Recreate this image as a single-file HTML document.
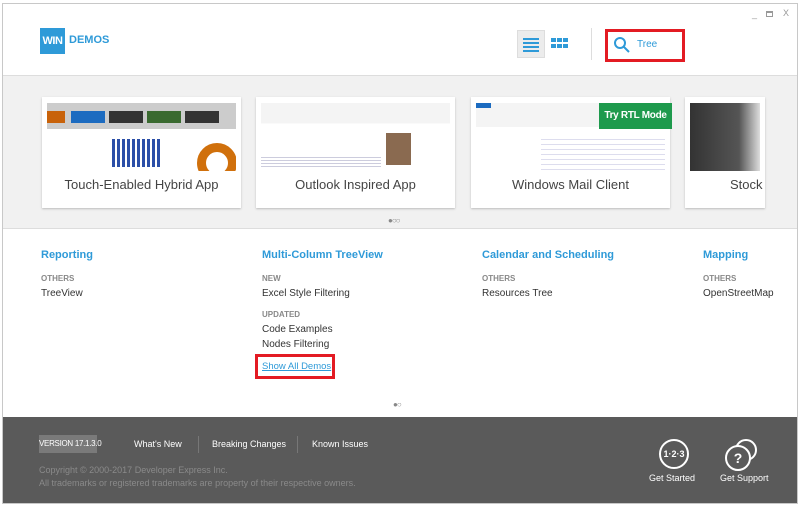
<!DOCTYPE html>
<html><head><style>
*{margin:0;padding:0;box-sizing:border-box}
body{width:800px;height:506px;background:#fff;font-family:"Liberation Sans",sans-serif;position:relative;overflow:hidden}
.win{position:absolute;left:2px;top:3px;width:796px;height:501px;border:1px solid #c8c8c8;overflow:hidden;background:#fff}
.a{position:absolute;white-space:nowrap}
.band{left:0;top:71px;width:796px;height:154px;background:#f1f1f1;border-top:1px solid #ddd;border-bottom:1px solid #ddd}
.card{top:93px;width:199px;height:111px;background:#fff;box-shadow:0 1px 2px #bbb}
.card .shot{position:absolute;left:5px;top:6px;right:5px;height:68px;background:#eee;overflow:hidden}
.card .lbl{position:absolute;left:0;right:0;top:80px;text-align:center;font-size:13px;color:#444}
.h{font-size:11px;font-weight:bold;color:#2e9ad8}
.o{font-size:8px;font-weight:bold;color:#888}
.i{font-size:10px;color:#333}
.foot{left:0;top:413px;width:796px;height:88px;background:#5a5a5a;color:#fff}
</style></head><body>
<div class="win">
 <div class="a" style="right:40px;top:5px;font-size:9px;color:#999">_</div>
 <div class="a" style="right:24px;top:7px;width:7px;height:6px;border:1px solid #999;border-top-width:2px"></div>
 <div class="a" style="right:8px;top:4px;font-size:9px;color:#999">X</div>
 <div class="a" style="left:37px;top:24px;width:25px;height:26px;background:#2e9ad8;color:#fff;font-weight:bold;font-size:11px;line-height:26px;text-align:center;letter-spacing:-0.5px">WIN</div>
 <div class="a" style="left:66px;top:30px;color:#2e9ad8;font-weight:bold;font-size:11px">DEMOS</div>
 <div class="a" style="left:514px;top:26px;width:28px;height:28px;background:#ececec;border:1px solid #ddd"></div>
 <div class="a" style="left:520px;top:34px;width:16px;height:2px;background:#2e9ad8;box-shadow:0 4px #2e9ad8,0 8px #2e9ad8,0 12px #2e9ad8"></div>
 <div class="a" style="left:548px;top:34px;width:5px;height:4px;background:#2e9ad8;box-shadow:6px 0 #2e9ad8,12px 0 #2e9ad8,0 6px #2e9ad8,6px 6px #2e9ad8,12px 6px #2e9ad8"></div>
 <div class="a" style="left:588px;top:24px;width:1px;height:32px;background:#ddd"></div>
 <div class="a" style="left:602px;top:25px;width:80px;height:33px;border:3px solid #e31b23"></div>
 <svg class="a" style="left:610px;top:32px" width="18" height="18"><circle cx="7" cy="7" r="5" fill="none" stroke="#2e9ad8" stroke-width="2"/><path d="M11 11l5 5" stroke="#2e9ad8" stroke-width="2"/></svg>
 <div class="a" style="left:634px;top:35px;font-size:10px;color:#2e9ad8">Tree</div>
 <div class="a band"></div>
 <div class="a card" style="left:39px"><div class="shot" style="background:linear-gradient(#ccc 0,#ccc 38%,#fff 38%)">
   <div class="a" style="left:0;top:8px;width:18px;height:12px;background:#c8620a"></div>
   <div class="a" style="left:24px;top:8px;width:34px;height:12px;background:#1c6bc0"></div>
   <div class="a" style="left:62px;top:8px;width:34px;height:12px;background:#333"></div>
   <div class="a" style="left:100px;top:8px;width:34px;height:12px;background:#3a6a30"></div>
   <div class="a" style="left:138px;top:8px;width:34px;height:12px;background:#333"></div>
   <div class="a" style="left:65px;top:36px;width:50px;height:28px;background:repeating-linear-gradient(90deg,#2b4fa8 0 3px,#fff 3px 5px)"></div>
   <div class="a" style="left:150px;top:40px;width:40px;height:40px;border:9px solid #d0700c;border-radius:50%"></div>
 </div><div class="lbl">Touch-Enabled Hybrid App</div></div>
 <div class="a card" style="left:253px"><div class="shot" style="background:linear-gradient(#f4f4f4 0,#f4f4f4 30%,#fff 30%)">
   <div class="a" style="left:125px;top:30px;width:25px;height:32px;background:#8a6a50"></div>
   <div class="a" style="left:0;top:52px;width:120px;height:14px;background:repeating-linear-gradient(#fff 0 2px,#ccd 2px 3px)"></div>
 </div><div class="lbl">Outlook Inspired App</div></div>
 <div class="a card" style="left:468px"><div class="shot" style="background:linear-gradient(#f4f4f4 0,#f4f4f4 35%,#fff 35%)">
   <div class="a" style="left:0;top:0;width:15px;height:5px;background:#1c6bc0"></div>
   <div class="a" style="left:65px;top:32px;width:124px;height:36px;background:repeating-linear-gradient(#fff 0 4px,#dde 4px 5px)"></div>
 </div><div class="a" style="left:128px;top:6px;width:73px;height:26px;background:#1e9a4d;color:#fff;font-weight:bold;font-size:10px;line-height:26px;text-align:center;letter-spacing:-0.3px">Try RTL Mode</div><div class="lbl">Windows Mail Client</div></div>
 <div class="a card" style="left:682px;width:80px;overflow:hidden"><div class="shot" style="background:linear-gradient(90deg,#333,#555 70%,#ddd)"></div><div class="lbl" style="text-align:left;left:45px">Stock</div></div>
 <div class="a" style="left:385px;top:212px;font-size:8px;color:#888;letter-spacing:-1px">●○○</div>
 <div class="a h" style="left:38px;top:245px">Reporting</div>
 <div class="a o" style="left:38px;top:270px">OTHERS</div>
 <div class="a i" style="left:38px;top:284px">TreeView</div>
 <div class="a h" style="left:259px;top:245px">Multi-Column TreeView</div>
 <div class="a o" style="left:259px;top:270px">NEW</div>
 <div class="a i" style="left:259px;top:284px">Excel Style Filtering</div>
 <div class="a o" style="left:259px;top:306px">UPDATED</div>
 <div class="a i" style="left:259px;top:320px">Code Examples</div>
 <div class="a i" style="left:259px;top:335px">Nodes Filtering</div>
 <div class="a" style="left:252px;top:350px;width:80px;height:25px;border:3px solid #e31b23"></div>
 <div class="a" style="left:259px;top:357px;font-size:9.5px;color:#2e9ad8;text-decoration:underline">Show All Demos</div>
 <div class="a h" style="left:479px;top:245px">Calendar and Scheduling</div>
 <div class="a o" style="left:479px;top:270px">OTHERS</div>
 <div class="a i" style="left:479px;top:284px">Resources Tree</div>
 <div class="a h" style="left:700px;top:245px">Mapping</div>
 <div class="a o" style="left:700px;top:270px">OTHERS</div>
 <div class="a i" style="left:700px;top:284px">OpenStreetMap</div>
 <div class="a" style="left:390px;top:396px;font-size:8px;color:#888;letter-spacing:-1px">●○</div>
 <div class="a foot">
  <div class="a" style="left:36px;top:18px;width:58px;height:18px;background:#7a7a7a;font-size:8px;line-height:18px;text-align:center;letter-spacing:-0.3px">VERSION 17.1.3.0</div>
  <div class="a" style="left:131px;top:22px;font-size:9px">What's New</div>
  <div class="a" style="left:195px;top:19px;width:1px;height:17px;background:#777"></div>
  <div class="a" style="left:209px;top:22px;font-size:9px">Breaking Changes</div>
  <div class="a" style="left:294px;top:19px;width:1px;height:17px;background:#777"></div>
  <div class="a" style="left:309px;top:22px;font-size:9px">Known Issues</div>
  <div class="a" style="left:36px;top:47px;font-size:9px;color:#8a8a8a;line-height:13px">Copyright © 2000-2017 Developer Express Inc.<br>All trademarks or registered trademarks are property of their respective owners.</div>
  <div class="a" style="left:656px;top:22px;width:30px;height:30px;border:2px solid #fff;border-radius:50%;font-size:9px;font-weight:bold;text-align:center;line-height:26px">1·2·3</div>
  <div class="a" style="left:646px;top:56px;font-size:9px">Get Started</div>
  <div class="a" style="left:732px;top:22px;width:22px;height:22px;border:2px solid #fff;border-radius:50%"></div>
  <div class="a" style="left:722px;top:28px;width:26px;height:26px;border:2px solid #fff;border-radius:50%;background:#5a5a5a;font-size:14px;font-weight:bold;text-align:center;line-height:22px">?</div>
  <div class="a" style="left:717px;top:56px;font-size:9px">Get Support</div>
 </div>
</div>
</body></html>
